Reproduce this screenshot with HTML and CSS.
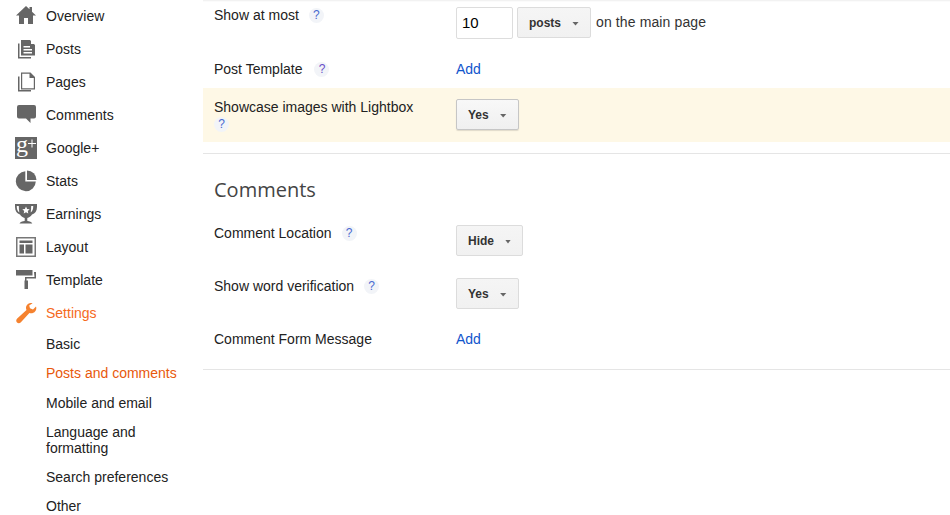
FILE: index.html
```html
<!DOCTYPE html>
<html lang="en">
<head>
<meta charset="utf-8">
<title>Settings › Posts and comments</title>
<link rel="stylesheet" href="styles.css">
</head>
<body>
<div class="page">
  <nav class="sidebar">
    <a class="nav-item"><svg class="icon" viewBox="0 0 22 22"><path d="M11 1 1 10.500h3V19h5v-6h4v6h5v-8.500h3l-4-3.800V2h-2.500v2.300z"/></svg><span>Overview</span></a>
    <a class="nav-item"><svg class="icon" viewBox="0 0 22 22"><path d="M3 5.500h1.500V19H16v1.500H3z"/><path fill-rule="evenodd" d="M6 2h9l5 5v10.500H6zM8.500 8v1.500H15V8zm0 3v1.500H17V11zm0 3v1.500H17V14z"/><path class="cut" d="M16 1.500 20.500 6H16z"/></svg><span>Posts</span></a>
    <a class="nav-item"><svg class="icon" viewBox="0 0 22 22"><path d="M3 5.500h1.500V19H16v1.500H3z"/><path fill-rule="evenodd" d="M6 1.500h9.500l4.500 4.500v12.500H6zM7.200 2.700v14.600h11.600V7h-4.300V2.700z"/></svg><span>Pages</span></a>
    <a class="nav-item"><svg class="icon" viewBox="0 0 22 22"><path d="M4 1h15a2 2 0 0 1 2 2v9.500a2 2 0 0 1-2 2h-3.500V19l-4.500-4.500H4a2 2 0 0 1-2-2V3a2 2 0 0 1 2-2z"/></svg><span>Comments</span></a>
    <a class="nav-item"><svg class="icon icon-open" viewBox="0 0 22 22"><rect width="22" height="22"/><text class="gplus" x="1" y="15">g</text><path class="cut" d="M16.500 2.500h1v3.500H21v1h-3.500v3.500h-1V7H13V6h3.500z"/></svg><span>Google+</span></a>
    <a class="nav-item"><svg class="icon" viewBox="0 0 22 22"><path d="M10.300 1.200a10 10 0 1 0 10.500 10.300H10.300z"/><path d="M12 .5a9.500 9.500 0 0 1 9.500 9.500H12z"/></svg><span>Stats</span></a>
    <a class="nav-item"><svg class="icon" viewBox="0 0 22 22"><path fill-rule="evenodd" d="M0 1h22v3c0 4-2 6.500-5 7.500-1 2-3 3-4.700 3.500v3c2 .2 4.500 1 5 2.500H4.500c.5-1.500 3-2.300 5.200-2.500v-3C8 14.500 6 13.500 5 11.500 2 10.500 0 8 0 4zM1.800 3v1c0 2.500 1 4.400 2.500 5.500C4 7.500 3.800 5 3.800 3zm14.400 0c0 2-.2 4.500-.5 6.500 1.500-1.100 2.500-3 2.500-5.500V3z"/><path class="cut" d="m11 3.500 1.100 2.400 2.600.3-1.900 1.700.5 2.600-2.300-1.300-2.300 1.300.5-2.600-1.900-1.700 2.600-.3z"/></svg><span>Earnings</span></a>
    <a class="nav-item"><svg class="icon" viewBox="0 0 22 22"><path class="frame" fill-rule="evenodd" d="M1 1h20v20H1zm1.500 1.500v17h17v-17z"/><path d="M4.500 4.500h13V7h-13zM4.500 8.500h4.500v9H4.500zM10.500 8.500h7v9h-7z"/></svg><span>Layout</span></a>
    <a class="nav-item"><svg class="icon" viewBox="0 0 22 22"><path d="M1 1h16.500v5.500H1zM19 3h2v6.500H11.500v2H13V20H9.500v-8.500H10V8h9.500z"/></svg><span>Template</span></a>
    <a class="nav-item active"><svg class="icon" viewBox="0 0 22 22"><path d="M16 1c-2.800 0-5 2.200-5 5 0 .8.200 1.500.5 2.100L2.200 16.500c-1.200 1.100-1.300 3-.2 4 1.100 1.100 2.800 1 3.900-.2l8.500-9.400c.6.300 1.200.4 1.900.4 2.800 0 5-2.200 5-5 0-.6-.1-1.200-.3-1.700L18 7.500l-3-1.200-.8-2.800 3.400-2.300C17.200 1 16.600 1 16 1z"/></svg><span>Settings</span></a>
    <ul class="subnav">
      <li>Basic</li>
      <li class="current">Posts and comments</li>
      <li class="after-current">Mobile and email</li>
      <li>Language and<br>formatting</li>
      <li>Search preferences</li>
      <li>Other</li>
    </ul>
  </nav>
  <main class="main">
    <section class="group group-post">
      <div class="row row-first">
        <div class="label">Show at most<span class="help">?</span></div>
        <div class="control">
          <span class="input">10</span>
          <button class="select select-posts">posts<i class="caret"></i></button>
          <span class="suffix">on the main page</span>
        </div>
      </div>
      <div class="row row-template">
        <div class="label">Post Template<span class="help help-purple">?</span></div>
        <div class="control"><a class="link">Add</a></div>
      </div>
      <div class="row row-highlight">
        <div class="label">Showcase images with Lightbox<br><span class="help help-wrap">?</span></div>
        <div class="control"><button class="select select-raised">Yes<i class="caret"></i></button></div>
      </div>
    </section>
    <section class="group group-comments">
      <h2 class="heading">Comments</h2>
      <div class="row row-comment">
        <div class="label">Comment Location<span class="help">?</span></div>
        <div class="control"><button class="select select-hide">Hide<i class="caret"></i></button></div>
      </div>
      <div class="row row-comment">
        <div class="label">Show word verification<span class="help">?</span></div>
        <div class="control"><button class="select">Yes<i class="caret"></i></button></div>
      </div>
      <div class="row">
        <div class="label">Comment Form Message</div>
        <div class="control"><a class="link">Add</a></div>
      </div>
    </section>
  </main>
</div>
</body>
</html>
```
FILE: styles.css
```css
* { box-sizing: border-box; }
html, body { margin: 0; height: 100%; overflow: hidden; background: #fff; }
body { font-family: "Liberation Sans", Arial, sans-serif; font-size: 14px; line-height: 16px; color: #222; }
.page { display: flex; height: 515px; overflow: hidden; }

.sidebar { flex: 0 0 203px; padding-left: 15px; }
.nav-item { display: flex; align-items: center; height: 33px; padding-bottom: 2px; }
.nav-item span { margin-left: 9px; }
.icon { width: 22px; height: 22px; fill: #666; flex: none; }
.icon-open { overflow: visible; }
.icon .cut { fill: #fff; }
.icon .frame { fill: #777; }
.gplus { font-family: "Liberation Serif", serif; font-size: 24px; fill: #fff; }
.active { color: #f56a1d; }
.active .icon { fill: #f5822f; }

.subnav { list-style: none; margin: 6px 0 0; padding: 0 0 0 31px; display: flex; flex-direction: column; gap: 13px; }
.subnav .current { color: #e8590c; }
.subnav .after-current { margin-top: 1px; }

.main { flex: 1; min-width: 0; box-shadow: inset 0 3px 2px -2px #eee; padding-top: 7px; }
.group { border-bottom: 1px solid #e5e5e5; }
.group-post { height: 147px; }
.group-comments { height: 216px; padding-top: 24px; }

.row { display: grid; grid-template-columns: 242px 1fr; padding-left: 11px; }
.row-first { height: 32px; }
.row-template { margin-top: 22px; }
.row-highlight { margin-top: 11px; background: #fef8e6; padding-top: 11px; height: 54px; }
.row-comment { height: 31px; margin-bottom: 22px; }

.help { display: inline-block; width: 15px; height: 15px; margin: 1px 0 0 10px; border-radius: 50%; background: #f2f4f8; color: #4a6ad0; font-size: 12px; line-height: 15px; text-align: center; vertical-align: top; }
.help-purple { margin-left: 12px; color: #6a4fc8; }
.help-wrap { margin: 2px 0 0; }

.control { display: flex; align-items: flex-start; }
.input { width: 57px; height: 32px; border: 1px solid #ddd; border-radius: 2px; padding: 0 5px; font-size: 15px; line-height: 30px; color: #000; background: #fff; }
.select { display: inline-flex; align-items: center; height: 31px; padding: 0 11px; border: 1px solid #dcdcdc; border-radius: 2px; background: linear-gradient(#f5f5f5, #f1f1f1); font: 700 12px "Liberation Sans", Arial, sans-serif; color: #333; }
.select-posts { margin-left: 4px; }
.select-raised { border-color: #c6c6c6; box-shadow: 0 1px 1px rgba(0,0,0,.12); background: linear-gradient(#f8f8f8, #f0f0f0); }
.select-hide { width: 67px; }
.caret { width: 7px; height: 4px; margin-left: 11px; margin-top: 2px; background: #666; clip-path: polygon(0 0, 100% 0, 50% 100%); }
.suffix { margin-left: 5px; padding-top: 7px; color: #333; letter-spacing: .12px; }
.link { color: #15c; }

.heading { margin: 0 0 23px 11px; font: 400 20px/24px "Open Sans", sans-serif; color: #444; }
```
